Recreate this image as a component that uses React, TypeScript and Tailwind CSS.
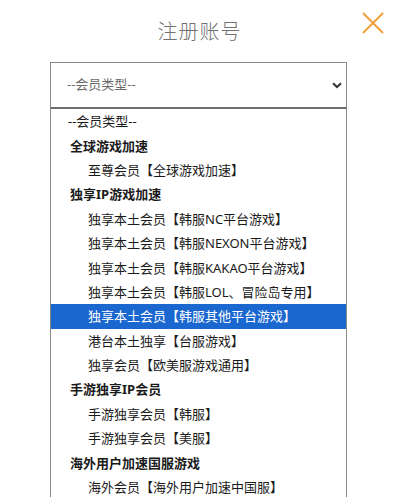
import React from "react";

type Row = { text: string; kind: "placeholder" | "group" | "option"; selected?: boolean };

const rows: Row[] = [
  { text: "--会员类型--", kind: "placeholder" },
  { text: "全球游戏加速", kind: "group" },
  { text: "至尊会员【全球游戏加速】", kind: "option" },
  { text: "独享IP游戏加速", kind: "group" },
  { text: "独享本土会员【韩服NC平台游戏】", kind: "option" },
  { text: "独享本土会员【韩服NEXON平台游戏】", kind: "option" },
  { text: "独享本土会员【韩服KAKAO平台游戏】", kind: "option" },
  { text: "独享本土会员【韩服LOL、冒险岛专用】", kind: "option" },
  { text: "独享本土会员【韩服其他平台游戏】", kind: "option", selected: true },
  { text: "港台本土独享【台服游戏】", kind: "option" },
  { text: "独享会员【欧美服游戏通用】", kind: "option" },
  { text: "手游独享IP会员", kind: "group" },
  { text: "手游独享会员【韩服】", kind: "option" },
  { text: "手游独享会员【美服】", kind: "option" },
  { text: "海外用户加速国服游戏", kind: "group" },
  { text: "海外会员【海外用户加速中国服】", kind: "option" },
];

export default function App() {
  return (
    <div
      className="relative w-[399px] h-[497px] overflow-hidden bg-white"
      style={{ fontFamily: '"Noto Sans", "Noto Sans CJK SC", sans-serif' }}
    >
      <div className="h-[62px] flex items-center justify-center">
        <span
          className="text-[20px] text-[#707070] tracking-[1px]"
          style={{ fontFamily: '"Noto Sans CJK SC", sans-serif', fontWeight: 300 }}
        >
          注册账号
        </span>
      </div>
      <button className="absolute left-[362px] top-[12px] w-[22px] h-[22px]">
        <svg viewBox="0 0 22 22" width="22" height="22">
          <path d="M1.5 1.5 L20.5 20.5 M20.5 1.5 L1.5 20.5" stroke="#f0a03c" strokeWidth="2" strokeLinecap="round" fill="none" />
        </svg>
      </button>
      <div className="ml-[50px] w-[297px]">
        <div className="h-[45px] border border-[#8a8a8a] border-b-0 flex items-center justify-between pl-[16px] pr-[4px]">
          <span className="text-[13px] text-[#6a6a6a]">--会员类型--</span>
          <svg viewBox="0 0 10 7" width="10" height="7">
            <path d="M1 1.2 L5 5 L9 1.2" stroke="#333" strokeWidth="2" fill="none" />
          </svg>
        </div>
        <div className="border-t-2 border-t-[#6e6e6e] border-x border-x-[#8a8a8a]">
          {rows.map((r, i) => (
            <div
              key={i}
              className={
                "h-[24.4px] flex items-center text-[13px] leading-[18px] whitespace-nowrap " +
                (r.selected ? "bg-[#1a67d0] text-white " : "text-[#1a1a1a] ") +
                (r.kind === "placeholder" ? "pl-[17px]" : r.kind === "group" ? "pl-[19px] font-bold" : "pl-[37px]")
              }
            >
              {r.text}
            </div>
          ))}
        </div>
      </div>
    </div>
  );
}
